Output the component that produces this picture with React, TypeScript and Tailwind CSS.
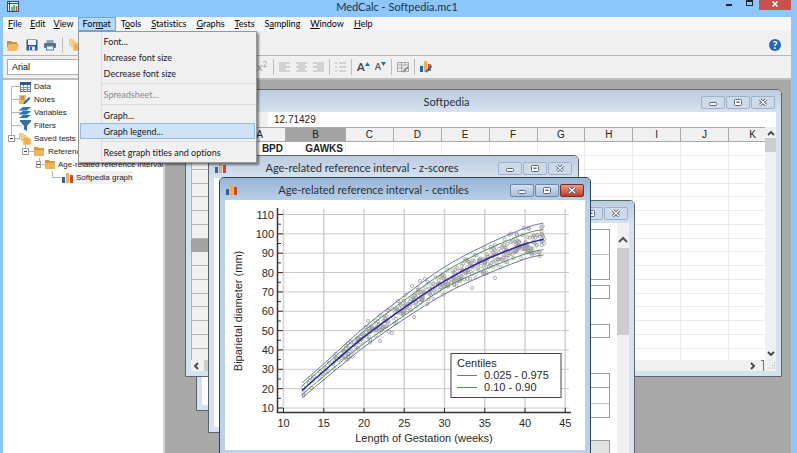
import React from 'react';

const menus = [
  ['', 'F', 'ile'],
  ['', 'E', 'dit'],
  ['', 'V', 'iew'],
  ['For', 'm', 'at'],
  ['T', 'o', 'ols'],
  ['', 'S', 'tatistics'],
  ['', 'G', 'raphs'],
  ['', 'T', 'ests'],
  ['S', 'a', 'mpling'],
  ['', 'W', 'indow'],
  ['', 'H', 'elp'],
];

const FolderIcon = () => (
  <svg width="12" height="11" viewBox="0 0 12 11">
    <path d="M0 1h4l1 1h5v2H2L0 9z" fill="#c9923f" />
    <path d="M2 4h10l-2 7H0z" fill="#f0b866" />
  </svg>
);

const ClosedFolderIcon = () => (
  <svg width="10" height="9" viewBox="0 0 10 9">
    <path d="M0 0h4l1 1h5v8H0z" fill="#d9983d" />
    <path d="M0 3h10v6H0z" fill="#efb25e" />
  </svg>
);

const PagesIcon = () => (
  <svg width="12" height="12" viewBox="0 0 12 12">
    <path d="M0 0h4l2 2v5H0z" fill="#f0c48a" />
    <path d="M2 2h5l2 2v5H2z" fill="#f5b968" stroke="#fff" strokeWidth=".5" />
    <path d="M4 4h5l3 2v6H4z" fill="#efae54" stroke="#fff" strokeWidth=".5" />
  </svg>
);

const BarsIcon = () => (
  <svg width="11" height="10" viewBox="0 0 11 10">
    <rect x="0" y="4" width="3" height="6" fill="#2f62a8" />
    <rect x="4" y="0" width="3" height="10" fill="#eeac55" />
    <rect x="8" y="2" width="3" height="8" fill="#c9472f" />
  </svg>
);

const SaveIcon = () => (
  <svg width="12" height="12" viewBox="0 0 12 12">
    <path d="M.5.5h10l1 1v10H.5z" fill="#2d5c91" />
    <rect x="2" y="1" width="8" height="5" fill="#f4f7fa" />
    <rect x="3" y="7.5" width="6" height="4" fill="#dfe6ee" />
    <rect x="4" y="8" width="2" height="3" fill="#2d5c91" />
  </svg>
);

const PrinterIcon = () => (
  <svg width="12" height="12" viewBox="0 0 12 12">
    <rect x="2.5" y="1" width="7" height="3" fill="#8fa7bd" />
    <rect x="0" y="4" width="12" height="5" rx="1" fill="#5c6f80" />
    <rect x="2.5" y="7" width="7" height="4" fill="#eaf1f8" stroke="#4f7fb0" />
  </svg>
);

const TableIcon = () => (
  <svg width="11" height="10" viewBox="0 0 11 10">
    <rect x=".5" y=".5" width="10" height="9" fill="#fff" stroke="#5f7387" />
    <rect x="0" y="0" width="11" height="3" fill="#2c5c93" />
    <path d="M0 5.500h11M0 7.500h11M3.500 3v7M7.500 3v7" stroke="#8495a5" />
  </svg>
);

const NotesIcon = () => (
  <svg width="12" height="11" viewBox="0 0 12 11">
    <path d="M0 1h7v9H0z" fill="#e8b76a" />
    <path d="M2 3h3M2 5h3" stroke="#9a7333" />
    <path d="M10 3L5 8l-1 2.500 2.500-1L11.500 4.500z" fill="#2c6cad" />
  </svg>
);

const VariablesIcon = () => (
  <svg width="12" height="11" viewBox="0 0 12 11">
    <path d="M4 0h8L8 3H0zM4 4h8L8 7H0zM4 8h8l-4 3H0z" fill="#2f73ae" />
    <path d="M0 3.500h8l4-3M0 7.500h8l4-3" stroke="#7fb0d8" fill="none" />
  </svg>
);

const FilterIcon = () => (
  <svg width="11" height="11" viewBox="0 0 11 11">
    <path d="M0 0h11v1.500L7 6v5L4 9.500V6L0 1.500z" fill="#3a6f9f" />
  </svg>
);

const AlignIcon = ({ d }: { d: string }) => (
  <svg width="11" height="10" viewBox="0 0 11 10">
    <path d={d} stroke="#b3b3b3" strokeWidth="1.200" />
  </svg>
);

const Divider = () => <span className="h-4 w-px bg-[#bdbdbd]" />;

const FontSizeIcon = ({ up }: { up?: boolean }) => (
  <span className="flex items-center">
    <span className={up ? 'text-[11px] leading-3 font-bold text-[#444]' : 'text-[9px] leading-3 font-bold text-[#555]'}>A</span>
    <svg width="5" height="10" viewBox="0 0 5 10">
      <path d={up ? 'M0 4L2.500 0 5 4z' : 'M0 0h5L2.500 4z'} fill="#2c6cad" />
    </svg>
  </span>
);

const TitleBar = () => (
  <header className="relative flex h-[17px] shrink-0 items-start justify-center">
    <svg className="absolute top-px left-1" width="12" height="11" viewBox="0 0 12 11">
      <rect x=".5" y=".5" width="11" height="10" fill="#e9f1f8" stroke="#24527f" />
      <path d="M0 2.500h12M2.500 0v11" stroke="#24527f" />
      <path d="M5 10V6M7 10V4" stroke="#3c9c4b" strokeWidth="1.500" />
      <path d="M9.500 10V5" stroke="#c9472f" strokeWidth="1.500" />
    </svg>
    <h1 className="text-[11px] leading-[13px] text-[#23323f]">MedCalc - Softpedia.mc1</h1>
    <div className="absolute top-0 right-0 flex">
      <button aria-label="Minimize" className="flex h-[10px] w-5 items-start justify-center pt-1">
        <span className="h-[2px] w-[6px] bg-[#1b2733]" />
      </button>
      <button aria-label="Maximize" className="flex h-[10px] w-5 items-start justify-center">
        <span className="h-[6px] w-[7px] border border-t-2 border-[#1b2733]" />
      </button>
      <button aria-label="Close" className="flex h-[10px] w-8 items-start justify-center bg-[#c8504f] pt-px">
        <svg width="6" height="6" viewBox="0 0 6 6"><path d="M.5.5l5 5M5.500.5l-5 5" stroke="#fff" strokeWidth="1.500" /></svg>
      </button>
    </div>
  </header>
);

const FormatMenu = () => {
  const item = 'mx-px flex h-4 items-center border border-transparent pl-[23px] text-left';
  const line = <div className="my-[2px] ml-[23px] h-px bg-[#dadada]" />;
  return (
    <div className="absolute top-[14px] left-0 z-20 flex h-[132px] w-[179px] flex-col border border-[#979797] bg-[#f0f0f0] py-px whitespace-nowrap text-[#1a1a1a] shadow-[2px_2px_2px_rgba(0,0,0,0.45)]">
      <div className="absolute top-px bottom-px left-[22px] w-px bg-[#dedede]" />
      <button className={item}>Font...</button>
      <button className={item}>Increase font size</button>
      <button className={item}>Decrease font size</button>
      {line}
      <button disabled className={item + ' text-[#8a8a8a]'}>Spreadsheet...</button>
      {line}
      <button className={item}>Graph...</button>
      <button className="relative mx-px flex h-4 items-center border border-[#8fbbe6] bg-[#cfe3f5] pl-[23px] text-left">Graph legend...</button>
      {line}
      <button className={item}>Reset graph titles and options</button>
    </div>
  );
};

const MenuBar = () => (
  <nav className="flex h-[14px] shrink-0 bg-[#f5f6f7] pl-px">
    {menus.map(([pre, key, post], i) => (
      <div key={pre + key + post} className="relative">
        <button
          className={
            pre === 'For'
              ? 'h-[14px] border border-[#6fa8dc] bg-[#b5d7f7] px-1 leading-3'
              : i < 3
                ? 'h-[14px] border border-transparent px-[3px] leading-3'
                : 'h-[14px] border border-transparent px-1 leading-3'
          }
        >
          {pre}<u>{key}</u>{post}
        </button>
        {pre === 'For' && <FormatMenu />}
      </div>
    ))}
  </nav>
);

const Toolbars = () => (
  <>
    <div className="flex h-6 shrink-0 items-center gap-[6px] bg-[#f0f0f0] px-1 pt-1">
      <button aria-label="Open"><FolderIcon /></button>
      <button aria-label="Save" className="ml-px"><SaveIcon /></button>
      <button aria-label="Print"><PrinterIcon /></button>
      <Divider />
      <button aria-label="Pages"><PagesIcon /></button>
      <button aria-label="Help" className="mr-[6px] ml-auto flex h-3 w-3 items-center justify-center rounded-full bg-[#2767ab] text-[11px] leading-3 font-bold text-white">?</button>
    </div>
    <div className="flex h-[25px] shrink-0 items-center gap-[5px] border-t border-b-2 border-t-[#b5b5b5] border-b-[#bdbdbd] bg-[#f0f0f0] px-1">
      <select aria-label="Font name" className="h-4 w-[244px] appearance-none border border-[#ababab] bg-white pl-1 font-['Liberation_Sans',sans-serif]">
        <option>Arial</option>
      </select>
      <button aria-label="Superscript" className="w-3 text-[11px] leading-3 text-[#a0a0a0]">x<sup className="text-[8px]">2</sup></button>
      <Divider />
      <button aria-label="Align left"><AlignIcon d="M0 1h11M0 3h7M0 5h11M0 7h7M0 9h11" /></button>
      <button aria-label="Align center" className="ml-px"><AlignIcon d="M0 1h11M2 3h7M0 5h11M2 7h7M0 9h11" /></button>
      <button aria-label="Align right" className="ml-px"><AlignIcon d="M0 1h11M4 3h7M0 5h11M4 7h7M0 9h11" /></button>
      <Divider />
      <button aria-label="Bullets"><AlignIcon d="M0 1h2M4 1h7M0 5h2M4 5h7M0 9h2M4 9h7" /></button>
      <Divider />
      <button aria-label="Increase font size"><FontSizeIcon up /></button>
      <button aria-label="Decrease font size"><FontSizeIcon /></button>
      <Divider />
      <button aria-label="Table options">
        <svg width="12" height="12" viewBox="0 0 12 12">
          <path d="M.5 1.500h11v9H.5zM.5 4h11M.5 7h7M4.500 2v8M8 2v3" fill="none" stroke="#a9a9a9" />
          <path d="M6 11l5-5" stroke="#8e8e8e" strokeWidth="2" />
        </svg>
      </button>
      <Divider />
      <button aria-label="Graph options">
        <svg width="12" height="12" viewBox="0 0 12 12">
          <rect x="0" y="5" width="3" height="6" fill="#1f62b0" />
          <rect x="4" y="0" width="3" height="11" fill="#eeac55" />
          <rect x="8" y="3" width="3" height="7" fill="#c9603f" />
          <path d="M6 11l5.500-6" stroke="#2c6cad" strokeWidth="2" />
        </svg>
      </button>
    </div>
  </>
);

const Expander = () => (
  <span className="flex h-[7px] w-[7px] items-center justify-center border border-[#a0a0a0] bg-white">
    <span className="h-px w-[3px] bg-[#444]" />
  </span>
);

const Sidebar = () => {
  const row = 'flex h-[13px] items-center gap-[3px] whitespace-nowrap';
  const icon = 'flex w-3 justify-center';
  return (
    <aside className="relative w-[160px] shrink-0 overflow-hidden bg-white font-['Liberation_Sans',sans-serif] text-[8px] text-[#1c1c1c]">
      <svg className="absolute top-0 left-0" width="100" height="110" viewBox="0 0 100 110" fill="none" stroke="#b4b4b4">
        <path d="M8.500 6.500v52M8.500 6.500h10M8.500 19.500h10M8.500 32.500h10M8.500 45.500h10M8.500 58.500h10M22.500 65v6.500h10M36.500 78v6.500h10M49.500 91v6.500h9" />
      </svg>
      <ul className="relative">
        <li className={row + ' pl-4'}><span className={icon}><TableIcon /></span>Data</li>
        <li className={row + ' pl-4'}><span className={icon}><NotesIcon /></span>Notes</li>
        <li className={row + ' pl-4'}><span className={icon}><VariablesIcon /></span>Variables</li>
        <li className={row + ' pl-4'}><span className={icon}><FilterIcon /></span>Filters</li>
        <li className={row + ' pl-[5px]'}><Expander /><span className={icon + ' ml-px'}><PagesIcon /></span>Saved tests and graphs</li>
        <li className={row + ' pl-[19px]'}><Expander /><span className={icon + ' ml-px'}><ClosedFolderIcon /></span>Reference intervals</li>
        <li className={row + ' pl-[33px]'}><Expander /><span className={icon + ' ml-px'}><ClosedFolderIcon /></span>Age-related reference interval</li>
        <li className={row + ' pl-[58px]'}><span className={icon}><BarsIcon /></span><span className="bg-[#f0f0f0]">Softpedia graph</span></li>
      </ul>
    </aside>
  );
};

const WindowButtons = ({ active }: { active?: boolean }) => {
  const base = active
    ? 'flex h-[13px] w-6 items-center justify-center rounded-[2px] border border-[#6f87a8] bg-linear-to-b from-[#d3e1f1] to-[#a5bedd]'
    : 'flex h-[13px] w-6 items-center justify-center rounded-[2px] border border-[#9fb0c8] bg-[#cddaea]';
  const close = active
    ? 'flex h-[13px] w-6 items-center justify-center rounded-[2px] border border-[#7a2a22] bg-linear-to-b from-[#e39a8c] to-[#c03a25]'
    : base;
  return (
    <div className="ml-auto flex gap-px">
      <button aria-label="Minimize" className={base}>
        <svg width="8" height="8" viewBox="0 0 8 8"><rect x=".5" y="4.500" width="7" height="3" rx="1" fill="#fff" stroke="#5d6775" /></svg>
      </button>
      <button aria-label="Maximize" className={base}>
        <svg width="8" height="8" viewBox="0 0 8 8"><rect x=".5" y="1.500" width="7" height="6" rx="1" fill="#fff" stroke="#5d6775" /><rect x="2.500" y="3.500" width="3" height="1.500" fill="#5d6775" /></svg>
      </button>
      <button aria-label="Close" className={close}>
        <svg width="8" height="8" viewBox="0 0 8 8">
          <path d="M1 1.500l6 5.500M7 1.500L1 7" stroke="#4b5461" strokeWidth="3" />
          <path d="M1 1.500l6 5.500M7 1.500L1 7" stroke="#fff" strokeWidth="1.400" />
        </svg>
      </button>
    </div>
  );
};

type WindowProps = { title: string; place: string; icon?: boolean; active?: boolean; children?: React.ReactNode };

const ChildWindow = ({ title, place, icon, active, children }: WindowProps) => (
  <section
    className={
      (active ? 'border-[#2c4654] bg-[#b9d1ea] ' : 'border-[#5b6570] bg-[#d5e3f1] ') +
      'absolute flex flex-col overflow-hidden rounded-t-[5px] border px-[5px] pb-[5px] ' + place
    }
  >
    <div
      className={
        (active ? 'from-[#98b4d6] to-[#b9cfe8] ' : 'from-[#bccbdf] to-[#d5e2f0] ') +
        '-mx-[5px] flex h-[22px] shrink-0 items-center bg-linear-to-b px-[6px] pt-[2px]'
      }
    >
      {icon && <BarsIcon />}
      <h2 className="flex-1 text-center text-[11px] leading-[14px] text-[#26303a]">{title}</h2>
      <WindowButtons active={active} />
    </div>
    {children}
  </section>
);

const Chevron = ({ d }: { d: string }) => (
  <svg width="8" height="8" viewBox="0 0 8 8"><path d={d} fill="none" stroke="#444" strokeWidth="1.800" /></svg>
);

const Spreadsheet = () => {
  const columns = ['A', 'B', 'C', 'D', 'E', 'F', 'G', 'H', 'I', 'J', 'K'];
  const rows = Array.from({ length: 16 }, (_, i) => i);
  return (
    <div className="flex min-h-0 flex-1 flex-col bg-white font-['Liberation_Sans',sans-serif] text-[10px] text-[#222]">
      <div className="flex h-[15px] shrink-0">
        <span className="w-[77px] bg-[#f0f0f0]" />
        <input aria-label="Cell value" defaultValue="12.71429" className="min-w-0 flex-1 pl-[6px]" />
      </div>
      <div className="flex min-h-0 flex-1">
        <div className="min-w-0 flex-1 overflow-hidden">
          <table className="w-[586px] table-fixed border-collapse leading-3">
            <thead>
              <tr className="h-[14px]">
                <th className="w-[42px] border border-[#a9a9a9] bg-[#f0f0f0] p-0" />
                {columns.map((c) => (
                  <th
                    key={c}
                    className={
                      c === 'B'
                        ? 'w-[60px] border border-[#a9a9a9] bg-[#a3a3a3] p-0 font-normal'
                        : c === 'A'
                          ? 'w-[52px] border border-[#a9a9a9] bg-[#f0f0f0] p-0 font-normal'
                          : 'border border-[#a9a9a9] bg-[#f0f0f0] p-0 font-normal'
                    }
                  >
                    {c}
                  </th>
                ))}
              </tr>
            </thead>
            <tbody>
              {rows.map((r) => (
                <tr key={r} className={r % 4 === 3 ? 'h-[13px]' : 'h-[14px]'}>
                  <th className={r === 7 ? 'border border-[#a0a0a0] bg-[#a3a3a3] p-0' : 'border border-[#b4b4b4] bg-[#f0f0f0] p-0'} />
                  {columns.map((c) => (
                    <td key={c} className="border border-[#ebebeb] p-0 pr-[2px] text-right font-bold">
                      {r === 0 && c === 'A' ? 'BPD' : r === 0 && c === 'B' ? 'GAWKS' : ''}
                    </td>
                  ))}
                </tr>
              ))}
            </tbody>
          </table>
        </div>
        <div className="flex w-[11px] flex-col items-center justify-between bg-[#f0f0f0] py-[2px]">
          <div className="flex w-full flex-col items-center gap-px">
            <Chevron d="M1 6l3-3 3 3" />
            <span className="h-[14px] w-full bg-[#cdcdcd]" />
          </div>
          <Chevron d="M1 2l3 3 3-3" />
        </div>
      </div>
      <div className="flex h-[11px] shrink-0 items-center justify-between bg-[#f0f0f0] pl-px">
        <Chevron d="M6 1L3 4l3 3" />
        <span className="ml-1 h-full w-[300px] bg-[#cdcdcd]" />
        <span className="ml-auto"><Chevron d="M2 1l3 3-3 3" /></span>
        <span className="mr-1 ml-1 h-full w-[3px] border-t border-r border-[#777]" />
        <svg width="8" height="8" viewBox="0 0 8 8"><path d="M6 1h1M4 3.500h1M6 3.500h1M1 6h1M4 6h1M6 6h1" stroke="#aaa" /></svg>
      </div>
    </div>
  );
};

const ReportPage = () => {
  const box = 'shrink-0 border border-[#9c9c9c]';
  return (
    <div className="flex min-h-0 flex-1 bg-white">
      <div className="flex min-w-0 flex-1 flex-col overflow-hidden pt-[6px] pr-[7px] pl-4">
        <div className={box + ' h-[51px]'}><div className="h-[25px] border-b border-[#c4c4c4]" /></div>
        <div className={box + ' mt-[5px] h-[14px]'} />
        <div className={box + ' mt-[25px] h-[14px]'} />
        <div className={box + ' mt-[35px] h-[45px]'}>
          <div className="h-[14px] border-b border-[#9c9c9c]" />
          <div className="h-4 border-b border-[#c4c4c4]" />
        </div>
        <div className={box + ' mt-[22px] h-8 bg-[#e2e2e2]'} />
      </div>
      <div className="flex w-3 flex-col items-center bg-[#f0f0f0]">
        <span className="flex h-[25px] items-center pt-2">
          <svg width="10" height="8" viewBox="0 0 10 8"><path d="M1 6l4-4 4 4" fill="none" stroke="#555" strokeWidth="2" /></svg>
        </span>
        <span className="h-[87px] w-full bg-[#cdcdcd]" />
      </div>
    </div>
  );
};

const px = (weeks: number) => 58.5 + (weeks - 10) * 8.05;
const py = (mm: number) => 208 - (mm - 10) * 1.935;

const weeks = [12.3, 15, 20, 25, 30, 35, 40, 42.3];
const centiles = {
  p975: [23, 32.8, 51.6, 67.9, 82.9, 94, 103, 105.6],
  p90: [21.4, 31.3, 49.8, 65.6, 80.3, 91.4, 100, 102.3],
  p50: [19, 29, 46.7, 61.9, 75.6, 86.5, 94.7, 97.2],
  p10: [16.8, 26.4, 43.4, 57.8, 72, 81.6, 89.6, 91.9],
  p025: [15.2, 24.6, 41.5, 56, 68.9, 78.8, 87, 89.1],
};

// Catmull-Rom spline through the table values
const curve = (values: number[]) => {
  const p = values.map((v, i) => [px(weeks[i]), py(v)]);
  let d = `M${p[0][0]} ${p[0][1]}`;
  for (let i = 0; i < p.length - 1; i++) {
    const a = p[Math.max(i - 1, 0)];
    const b = p[i];
    const c = p[i + 1];
    const e = p[Math.min(i + 2, p.length - 1)];
    d += `C${b[0] + (c[0] - a[0]) / 6} ${b[1] + (c[1] - a[1]) / 6} ${c[0] - (e[0] - b[0]) / 6} ${c[1] - (e[1] - b[1]) / 6} ${c[0]} ${c[1]}`;
  }
  return d;
};

const at = (values: number[], w: number) => {
  let i = 0;
  while (i < weeks.length - 2 && weeks[i + 1] < w) i++;
  const t = (w - weeks[i]) / (weeks[i + 1] - weeks[i]);
  return values[i] + t * (values[i + 1] - values[i]);
};

const samples = (() => {
  let seed = 11;
  const rnd = () => {
    seed = (seed * 16807) % 2147483647;
    return seed / 2147483647;
  };
  const out: number[][] = [];
  for (let i = 0; i < 440; i++) {
    const w = 12.4 + Math.pow(rnd(), 0.75) * 30;
    const spread = (rnd() + rnd() + rnd() - 1.5) / 1.1;
    out.push([px(w), py(at(centiles.p50, w) + spread * (at(centiles.p975, w) - at(centiles.p50, w)))]);
  }
  return out.concat([[247, 88], [270, 78], [187, 86], [195, 81], [143, 121], [155, 141], [167, 133], [299, 28], [200, 79], [189, 117]]);
})();

const CentilesChart = () => {
  const xs = [10, 15, 20, 25, 30, 35, 40, 45];
  const ys = [10, 20, 30, 40, 50, 60, 70, 80, 90, 100, 110];
  return (
    <svg className="min-h-0 w-full flex-1 bg-white font-['Liberation_Sans',sans-serif]" viewBox="0 0 360 250" fontSize="11" fill="#2a2a2a">
      <g stroke="#c8c8c8">
        {xs.map((x) => <path key={x} d={`M${px(x)} 9V212`} strokeWidth="1.500" stroke="#d2d2d2" />)}
        {ys.map((y) => <path key={y} d={`M53 ${py(y)}H344`} />)}
      </g>
      <g fill="none" stroke="#9c989f" strokeWidth=".8">
        {samples.map(([x, y], i) => <circle key={i} cx={x} cy={y} r="1.600" />)}
      </g>
      <g fill="none" strokeWidth="1">
        <path d={curve(centiles.p975)} stroke="#6f6fae" />
        <path d={curve(centiles.p025)} stroke="#6f6fae" />
        <path d={curve(centiles.p90)} stroke="#4f9150" />
        <path d={curve(centiles.p10)} stroke="#4f9150" />
        <path d={curve(centiles.p50)} stroke="#2b2b9c" strokeWidth="1.600" />
      </g>
      <g stroke="#333">
        <path d="M52.500 8V213M52 212.500H346" strokeWidth="1.500" />
        {xs.map((x) => <path key={x} d={`M${px(x)} 208V212`} />)}
        {ys.map((y) => <path key={y} d={`M53 ${py(y)}h5`} />)}
        {ys.slice(1).map((y) => <path key={y} d={`M53 ${py(y - 5)}h3`} />)}
      </g>
      <g textAnchor="end">
        {ys.map((y) => <text key={y} x="49" y={py(y) + 4}>{y}</text>)}
      </g>
      <g textAnchor="middle">
        {xs.map((x) => <text key={x} x={px(x)} y="227">{x}</text>)}
        <text x="199" y="242">Length of Gestation (weeks)</text>
        <text x="0" y="0" transform="translate(17 111) rotate(-90)">Biparietal diameter (mm)</text>
      </g>
      <rect x="226" y="153.500" width="110" height="44" fill="#fff" stroke="#444" />
      <text x="232" y="167">Centiles</text>
      <text x="259" y="179">0.025 - 0.975</text>
      <text x="259" y="191">0.10 - 0.90</text>
      <path d="M232 175.500h20" stroke="#6f6fae" />
      <path d="M232 187.500h20" stroke="#4f9150" />
    </svg>
  );
};

const Desktop = () => (
  <main className="relative min-w-0 flex-1 overflow-hidden bg-[#a9a9a9]">
    <ChildWindow title="" place="top-[50px] left-[31px] h-[281px] w-[400px]"><div className="flex-1 bg-white" /></ChildWindow>
    <ChildWindow title="Softpedia" place="top-[9px] left-5 h-[288px] w-[597px]"><Spreadsheet /></ChildWindow>
    <ChildWindow title="" place="top-[120px] left-[66px] h-[400px] w-[404px]"><ReportPage /></ChildWindow>
    <ChildWindow title="Age-related reference interval - z-scores" icon place="top-[75px] left-[43px] h-[278px] w-[371px]"><div className="flex-1 bg-white" /></ChildWindow>
    <ChildWindow title="Age-related reference interval - centiles" icon active place="top-[97px] left-[54px] h-[279px] w-[372px]"><CentilesChart /></ChildWindow>
  </main>
);

const App: React.FC = () => (
  <div className="flex h-screen flex-col overflow-hidden bg-[#8cc6fb] pr-[6px] pl-[3px] font-['Lato','Open_Sans',sans-serif] text-[9px] leading-[13px] [font-variant-ligatures:none]">
    <TitleBar />
    <MenuBar />
    <Toolbars />
    <div className="flex min-h-0 flex-1">
      <Sidebar />
      <div className="w-[2px] shrink-0 bg-[#d4d4d4]" />
      <Desktop />
    </div>
  </div>
);

export default App;
